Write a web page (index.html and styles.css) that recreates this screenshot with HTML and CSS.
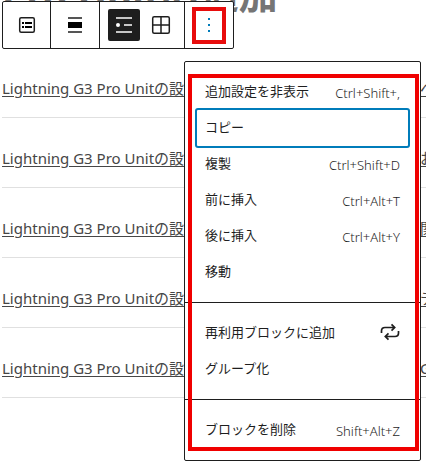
FILE: index.html
```html
<!DOCTYPE html>
<html lang="ja">
<head>
  <meta charset="UTF-8">
  <title>ブロックエディター</title>
  <link rel="stylesheet" href="styles.css">
</head>
<body>
  <main>
    <h1>Pro Unitの追加</h1>
    <ul class="posts">
      <li><a href="#"><span>Lightning G3 Pro Unitの設</span><span class="rest">ペ</span></a></li>
      <li><a href="#"><span>Lightning G3 Pro Unitの設</span><span class="rest">お</span></a></li>
      <li><a href="#"><span>Lightning G3 Pro Unitの設</span><span class="rest">関</span></a></li>
      <li><a href="#"><span>Lightning G3 Pro Unitの設</span><span class="rest">テ</span></a></li>
      <li><a href="#"><span>Lightning G3 Pro Unitの設</span><span class="rest">G</span></a></li>
    </ul>
  </main>

  <!-- Block toolbar -->
  <div class="toolbar" role="toolbar" aria-label="ブロックツール">
    <div class="group">
      <button class="tool" aria-label="リスト">
        <svg width="24" height="24" viewBox="0 0 24 24">
          <rect x="4.700" y="4.700" width="14.600" height="14.600" rx="1.500" fill="none" stroke="#1e1e1e" stroke-width="1.500"/>
          <path d="M7 9h2v2H7zM10 9h7v2h-7zM7 13h2v2H7zM10 13h7v2h-7z"/>
        </svg>
      </button>
    </div>
    <div class="group">
      <button class="tool" aria-label="配置">
        <svg width="24" height="24" viewBox="0 0 24 24">
          <path d="M5 9h14v6H5z"/>
          <path d="M5 4h14v2H5zM5 18h14v2H5z" fill="#555"/>
        </svg>
      </button>
    </div>
    <div class="group wide">
      <button class="tool active" aria-label="リスト表示" aria-pressed="true">
        <svg width="24" height="24" viewBox="0 0 24 24">
          <path d="M4 4.200h16v1.500H4zM12 11.200h8v1.500h-8zM4 18.200h16v1.500H4z"/>
          <circle cx="6" cy="12" r="2"/>
        </svg>
      </button>
      <button class="tool" aria-label="グリッド表示" aria-pressed="false">
        <svg width="24" height="24" viewBox="0 0 24 24" fill="none" stroke="#1e1e1e" stroke-width="1.500">
          <rect x="3.700" y="3.700" width="16.600" height="16.600" rx="1.500"/>
          <path d="M12 4v16M4 12h16"/>
        </svg>
      </button>
    </div>
    <div class="group">
      <button class="tool options" aria-label="オプション" aria-expanded="true">
        <svg width="24" height="24" viewBox="0 0 24 24">
          <path d="M11 5h2v2h-2zM11 11h2v2h-2zM11 17h2v2h-2z"/>
        </svg>
      </button>
    </div>
  </div>

  <!-- Options menu -->
  <div class="menu" role="menu">
    <div class="section">
      <button class="item" role="menuitem">追加設定を非表示<kbd>Ctrl+Shift+,</kbd></button>
      <button class="item focused" role="menuitem">コピー</button>
      <button class="item" role="menuitem">複製<kbd>Ctrl+Shift+D</kbd></button>
      <button class="item" role="menuitem">前に挿入<kbd>Ctrl+Alt+T</kbd></button>
      <button class="item" role="menuitem">後に挿入<kbd>Ctrl+Alt+Y</kbd></button>
      <button class="item" role="menuitem">移動</button>
    </div>
    <div class="section">
      <button class="item" role="menuitem">再利用ブロックに追加
        <svg width="20" height="24" viewBox="2 0 20 24" fill="none" stroke="#1e1e1e" stroke-width="1.700">
          <path d="M3.500 13v-2q0-3.500 3.500-3.500h9.500M13.500 4.300l3.200 3.200-3.200 3.200M20.500 11v2q0 3.500-3.500 3.500H7.500M10.500 13.300l-3.200 3.200 3.200 3.200"/>
        </svg>
      </button>
      <button class="item" role="menuitem">グループ化</button>
    </div>
    <div class="section">
      <button class="item" role="menuitem">ブロックを削除<kbd>Shift+Alt+Z</kbd></button>
    </div>
  </div>
</body>
</html>
```
FILE: styles.css
```css
* {
  box-sizing: border-box;
}

body {
  margin: 0;
  background: #fff;
  color: #1e1e1e;
  font-family: "Noto Sans", "Noto Sans CJK JP", sans-serif;
  overflow: hidden;
}

main {
  padding-left: 2px;
}

h1 {
  margin: -26px 0 34px;
  color: #757575;
  font-size: 39px;
  line-height: 40px;
  white-space: nowrap;
}

.posts {
  list-style: none;
  margin: 0;
  padding: 0;
}

.posts li {
  height: 70px;
  padding-top: 29px;
  border-bottom: 1px solid #e0e0e0;
  font-size: 15px;
  line-height: 22px;
  white-space: nowrap;
}

.posts a {
  display: flex;
  justify-content: space-between;
  color: #464646;
  text-decoration: underline;
  text-underline-offset: 2px;
}

/* end of the title, runs out past the window edge */
.rest {
  width: 6px;
}

.toolbar {
  position: absolute;
  top: 1px;
  left: 2px;
  display: flex;
  height: 48px;
  border: 1px solid #1e1e1e;
  border-radius: 2px;
  background: #fff;
}

.group {
  display: flex;
  align-items: center;
  justify-content: center;
  width: 49px;
}

.group:first-child {
  width: 47px;
}

.group + .group {
  border-left: 1px solid #1e1e1e;
}

.group.wide {
  width: 85px;
  gap: 5px;
}

button {
  margin: 0;
  border: 0;
  background: none;
  color: inherit;
  font-family: inherit;
  cursor: pointer;
}

.tool {
  display: flex;
  align-items: center;
  justify-content: center;
  width: 32px;
  height: 32px;
  padding: 0;
  border-radius: 2px;
}

.tool.active {
  background: #1e1e1e;
  fill: #fff;
}

.tool.options {
  width: 34px;
  height: 37px;
  border: 4px solid #e80c0c;
  border-radius: 0;
  fill: #007cba;
}

.menu {
  position: absolute;
  top: 61px;
  left: 184px;
  width: 237px;
  border: 1px solid #1e1e1e;
  border-radius: 2px;
  background: #fff;
}

/* red frame over the menu */
.menu::after {
  content: "";
  position: absolute;
  inset: 12px 1px 9px 3px;
  border: 4px solid #f00000;
  pointer-events: none;
}

.section {
  padding: 12px 10px;
}

.section + .section {
  border-top: 1px solid #1e1e1e;
}

.item {
  display: flex;
  align-items: center;
  justify-content: space-between;
  width: 100%;
  height: 36px;
  padding: 0 10px 2px;
  border-radius: 3px;
  font-size: 13px;
  line-height: 20px;
}

.item.focused {
  height: 40px;
  margin: -2px 0;
  box-shadow: inset 0 0 0 2px #007cba;
}

kbd {
  padding-top: 4px;
  font-family: inherit;
  font-weight: 300;
}
```
